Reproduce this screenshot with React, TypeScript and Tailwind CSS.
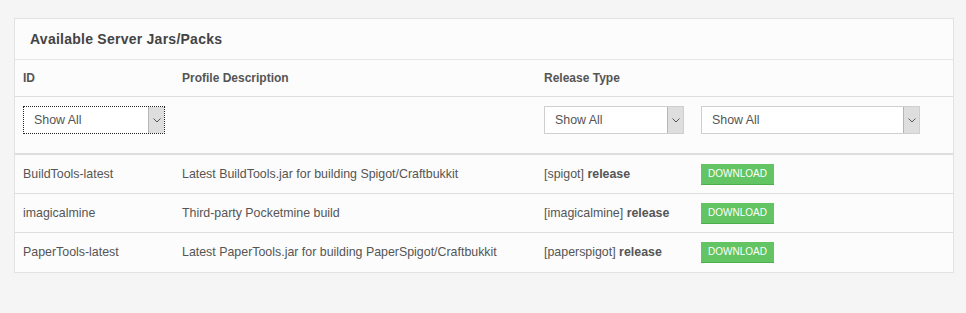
import React from "react";

function Select({ width, focus }: { width: string; focus?: boolean }) {
  return (
    <div
      className={`${width} h-[28px] flex bg-white ${
        focus ? "border border-dotted border-[#222]" : "border border-[#cfcfcf]"
      }`}
    >
      <div className="flex-1 flex items-center pl-[10px] text-[12.4px] text-[#555]">Show All</div>
      <div className="w-[16px] bg-[#dedede] border-l border-[#b5b5b5] flex items-center justify-center">
        <svg width="8" height="5" viewBox="0 0 8 5">
          <path d="M0.5 0.5 L4 4 L7.5 0.5" fill="none" stroke="#555" strokeWidth="1" />
        </svg>
      </div>
    </div>
  );
}

const rows = [
  ["BuildTools-latest", "Latest BuildTools.jar for building Spigot/Craftbukkit", "spigot"],
  ["imagicalmine", "Third-party Pocketmine build", "imagicalmine"],
  ["PaperTools-latest", "Latest PaperTools.jar for building PaperSpigot/Craftbukkit", "paperspigot"],
];

export default function App() {
  const cols = "grid grid-cols-[159px_362px_157px_1fr]";
  return (
    <div
      className="w-[966px] h-[313px] bg-[#f5f5f5] pt-[18px] pl-[14px]"
      style={{ fontFamily: '"Liberation Sans", Arial, sans-serif' }}
    >
      <div className="w-[940px] bg-[#fcfcfc] border border-[#e2e2e2] text-[12.4px] text-[#555]">
        <div className="h-[41px] flex items-center pl-[15px] border-b border-[#e6e6e6] text-[14px] tracking-[0.25px] font-bold text-[#444]">
          Available Server Jars/Packs
        </div>
        <div className={`${cols} h-[37px] items-center border-b border-[#dedede] font-bold text-[12px]`}>
          <div className="pl-[8px]">ID</div>
          <div className="pl-[8px]">Profile Description</div>
          <div className="pl-[8px]">Release Type</div>
          <div></div>
        </div>
        <div className={`${cols} h-[58px] pt-[9px] border-b-2 border-[#dedede]`}>
          <div className="pl-[8px]">
            <Select width="w-[142px]" focus />
          </div>
          <div></div>
          <div className="pl-[8px]">
            <Select width="w-[140px]" />
          </div>
          <div className="pl-[8px]">
            <Select width="w-[219px]" />
          </div>
        </div>
        {rows.map((r, i) => (
          <div
            key={i}
            className={`${cols} h-[39px] items-center ${i < rows.length - 1 ? "border-b border-[#dedede]" : ""}`}
          >
            <div className="pl-[8px]">{r[0]}</div>
            <div className="pl-[8px]">{r[1]}</div>
            <div className="pl-[8px]">
              [{r[2]}] <span className="font-bold">release</span>
            </div>
            <div className="pl-[8px]">
              <button className="w-[73px] h-[21px] bg-[#62c462] border-b border-[#4caf4c] text-white text-[10px] leading-none flex items-center justify-center">
                DOWNLOAD
              </button>
            </div>
          </div>
        ))}
      </div>
    </div>
  );
}
